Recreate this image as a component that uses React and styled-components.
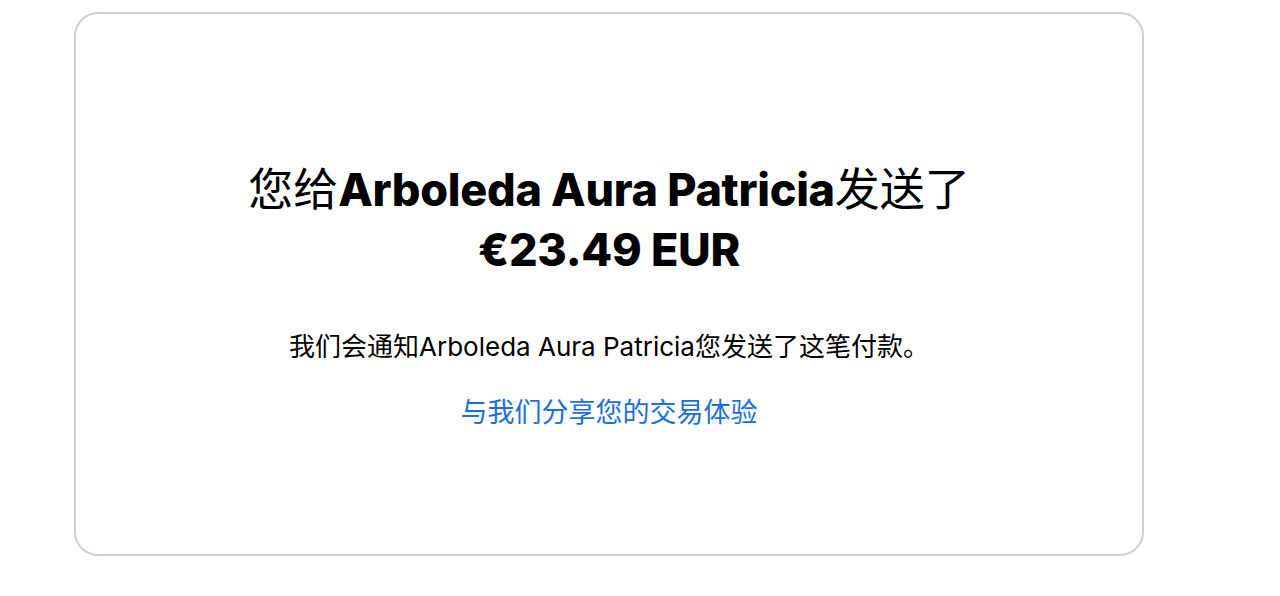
import React from "react";
import styled, { createGlobalStyle } from "styled-components";

const GlobalStyle = createGlobalStyle`
  html, body {
    margin: 0;
    padding: 0;
    background: #ffffff;
  }
  body {
    font-family: Inter, "Noto Sans CJK SC", sans-serif;
    color: #000000;
  }
`;

export default function App() {
  const recipient = "Arboleda Aura Patricia";
  const amount = "€23.49 EUR";

  return (
    <>
      <GlobalStyle />
      <Page>
        <Card>
          <Heading>
            <Cjk>您给</Cjk>
            <Name>{recipient}</Name>
            <Cjk>发送了</Cjk>
            <br />
            <Name>{amount}</Name>
          </Heading>
          <Notice>
            我们会通知<Latin>{recipient}</Latin>您发送了这笔付款。
          </Notice>
          <FeedbackLink href="#">与我们分享您的交易体验</FeedbackLink>
        </Card>
      </Page>
    </>
  );
}

const Page = styled.div`
  width: 1280px;
  height: 596px;
  padding: 12px 0 0 74px;
  box-sizing: border-box;
`;

const Card = styled.div`
  width: 1070px;
  height: 544px;
  box-sizing: border-box;
  border: 2px solid #cfcfcf;
  border-radius: 24px;
  display: flex;
  flex-direction: column;
  align-items: center;
  padding-top: 143px;
`;

const Heading = styled.h1`
  margin: 0;
  text-align: center;
  font-size: 45px;
  line-height: 60px;
  font-weight: 800;
  letter-spacing: -0.3px;
`;

const Cjk = styled.span`
  font-family: "Noto Sans CJK SC", sans-serif;
  font-weight: 400;
  letter-spacing: 0;
`;

const Name = styled.span`
  font-family: Inter, "Noto Sans CJK SC", sans-serif;
  font-weight: 800;
`;

const Notice = styled.p`
  margin: 47px 0 0;
  font-family: "Noto Sans CJK SC", sans-serif;
  font-size: 26px;
  line-height: 36px;
  text-align: center;
`;

const Latin = styled.span`
  font-family: Inter, sans-serif;
`;

const FeedbackLink = styled.a`
  margin-top: 28px;
  font-family: "Noto Sans CJK SC", sans-serif;
  font-size: 27px;
  line-height: 36px;
  color: #1a6fdf;
  text-decoration: none;
`;
